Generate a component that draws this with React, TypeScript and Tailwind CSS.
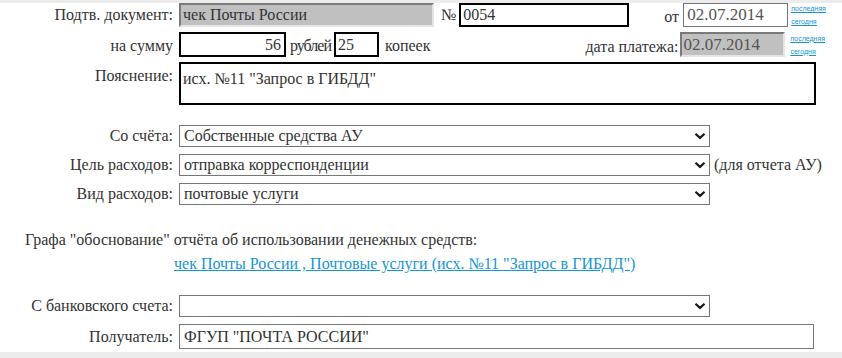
const serif = "[font-family:'Liberation_Serif','Times_New_Roman',serif]";

function Chevron() {
  return (
    <svg width="12" height="7" viewBox="0 0 12 7" className="pointer-events-none absolute right-[3px] top-1/2 -translate-y-1/2">
      <path d="M1.5 1.2 L6 5.4 L10.5 1.2" fill="none" stroke="#1a1a1a" strokeWidth="2.2" />
    </svg>
  );
}

function Select({ value, className = "" }: { value: string; className?: string }) {
  return (
    <div className={`relative flex h-[22px] items-center border border-[#767676] bg-white pl-[4px] ${className}`}>
      <span className="leading-none">{value}</span>
      <Chevron />
    </div>
  );
}

function DateLinks() {
  return (
    <div className="ml-[3px] flex flex-col gap-[4px] [font-family:'Liberation_Sans',Arial,sans-serif] text-[7px] leading-[9px] text-[#1496d6] underline">
      <a href="#">последняя</a>
      <a href="#">сегодня</a>
    </div>
  );
}

function Label({ children, className = "" }: { children: React.ReactNode; className?: string }) {
  return <div className={`w-[173px] shrink-0 text-right ${className}`}>{children}</div>;
}

export default function App() {
  return (
    <div className={`flex h-[358px] w-[842px] flex-col bg-white text-[16px] leading-[18px] text-[#333] ${serif}`}>
      <div className="h-[3px] bg-[#ececec]" />

      {/* document row */}
      <div className="flex h-[24px] items-center">
        <Label>Подтв. документ:</Label>
        <div className="ml-[6px] flex h-[24px] w-[255px] items-center border-2 border-t-[#7a7a7a] border-l-[#7a7a7a] border-r-[#e4e4e4] border-b-[#e4e4e4] bg-[#c0c0c0] pl-[2px]">
          чек Почты России
        </div>
        <span className="ml-[7px]">№</span>
        <div className="ml-[3px] flex h-[24px] w-[170px] items-center border-2 border-black pl-[2px]">0054</div>
        <span className="ml-[35px] mt-[4px] w-[17px]">от</span>
        <div className="ml-[2px] flex h-[24px] w-[105px] items-center border border-[#777] pl-[3px] text-[17px] text-[#555]">
          02.07.2014
        </div>
        <DateLinks />
      </div>

      {/* sum row */}
      <div className="mt-[5px] flex h-[25px] items-center">
        <Label className="mt-[3px]">на сумму</Label>
        <div className="ml-[6px] flex h-[25px] w-[107px] items-center justify-end border-2 border-black pr-[3px]">56</div>
        <span className="ml-[4px] mt-[3px] tracking-[-1px]">рублей</span>
        <div className="ml-[3px] flex h-[25px] w-[45px] items-center border-2 border-black pl-[2px]">25</div>
        <span className="ml-[6px] mt-[3px]">копеек</span>
        <span className="ml-auto mt-[5px]">дата платежа:</span>
        <div className="ml-[2px] flex h-[25px] w-[105px] items-center border-2 border-t-[#7a7a7a] border-l-[#7a7a7a] border-r-[#e4e4e4] border-b-[#e4e4e4] bg-[#c0c0c0] pl-[1px] text-[17px] text-[#555]">
          02.07.2014
        </div>
        <div className="mr-[17px] ml-[2px]">
          <DateLinks />
        </div>
      </div>

      {/* note row */}
      <div className="mt-[5px] flex items-start">
        <Label className="mt-[5px]">Пояснение:</Label>
        <div className="ml-[6px] h-[43px] w-[637px] border-2 border-black pl-[2px] pt-[6px]">
          исх. №11 "Запрос в ГИБДД"
        </div>
      </div>

      {/* selects */}
      <div className="mt-[20px] flex flex-col gap-[7px]">
        <div className="flex items-center">
          <Label>Со счёта:</Label>
          <Select value="Собственные средства АУ" className="ml-[6px] w-[531px]" />
        </div>
        <div className="flex items-center">
          <Label>Цель расходов:</Label>
          <Select value="отправка корреспонденции" className="ml-[6px] w-[531px]" />
          <span className="ml-[4px]">(для отчета АУ)</span>
        </div>
        <div className="flex items-center">
          <Label>Вид расходов:</Label>
          <Select value="почтовые услуги" className="ml-[6px] w-[531px]" />
        </div>
      </div>

      {/* report text */}
      <div className="mt-[26px] pl-[25px]">Графа "обоснование" отчёта об использовании денежных средств:</div>
      <div className="mt-[6px] pl-[174px]">
        <a href="#" className="text-[#1496d6] underline">
          чек Почты России , Почтовые услуги (исх. №11 "Запрос в ГИБДД")
        </a>
      </div>

      <div className="mt-[22px] flex items-center">
        <Label>С банковского счета:</Label>
        <Select value="" className="ml-[6px] w-[531px]" />
      </div>
      <div className="mt-[7px] flex items-center">
        <Label>Получатель:</Label>
        <div className="ml-[6px] flex h-[25px] w-[635px] items-center border border-[#777] pl-[4px]">ФГУП "ПОЧТА РОССИИ"</div>
      </div>

      <div className="mt-auto h-[6px] bg-[#ececec]" />
    </div>
  );
}
